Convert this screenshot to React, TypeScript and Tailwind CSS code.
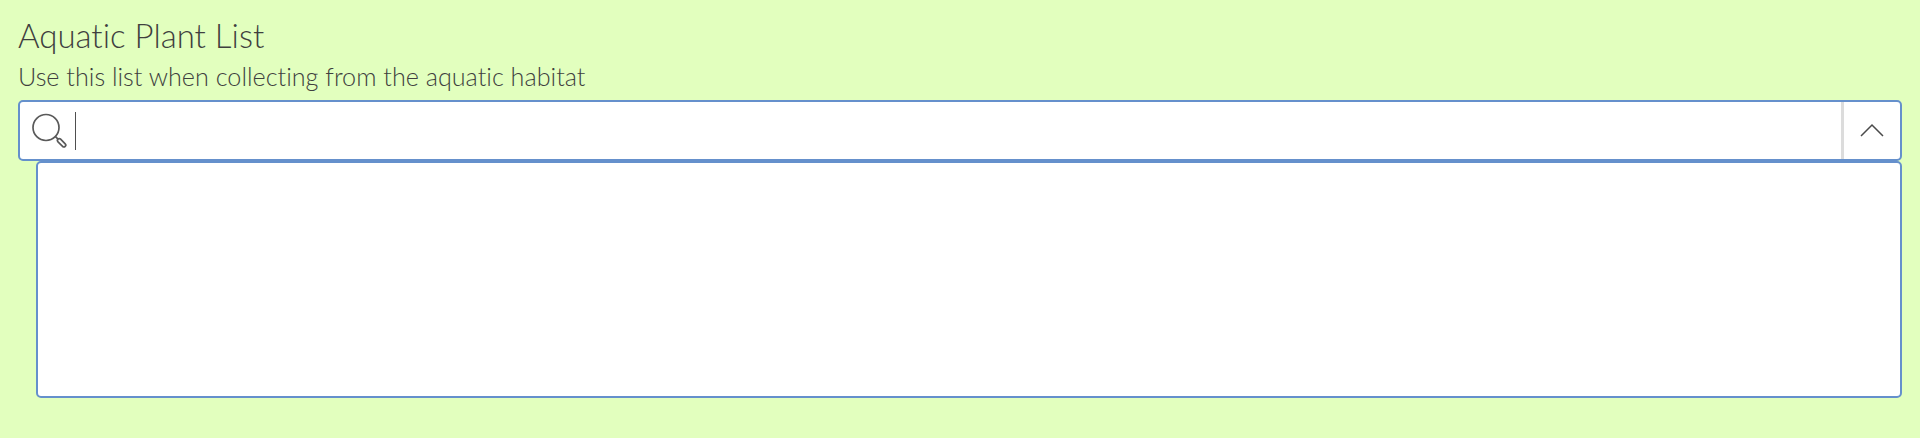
import React from 'react';

function SearchIcon(): React.ReactElement {
  return (
    <svg width="36" height="36" viewBox="0 0 36 36" fill="none" stroke="#5a5a5a" strokeWidth="1.7">
      <circle cx="14" cy="14.5" r="13" />
      <path d="M23.5 23.7 L26 26.2" />
      <path d="M26 26.2 C26.8 25.4 27.8 25.4 28.6 26.2 L33.2 30.8 C34 31.6 34 32.6 33.2 33.4 C32.4 34.2 31.4 34.2 30.6 33.4 L26 28.8 C25.2 28 25.2 27 26 26.2 Z" />
    </svg>
  );
}

function ChevronUp(): React.ReactElement {
  return (
    <svg width="24" height="14" viewBox="0 0 24 14" fill="none" stroke="#4a4a4a" strokeWidth="1.5">
      <path d="M1 13 L12 2 L23 13" />
    </svg>
  );
}

export default function App(): React.ReactElement {
  return (
    <div className="h-[438px] w-[1920px] overflow-hidden bg-[#e2ffbe] pl-[18px] pr-[18px] pt-[16px] font-['Lato',sans-serif] text-[#3f3f3f] [font-variant-ligatures:none]">
      <h2 className="h-[38px] text-[33px] font-light leading-[38px]">Aquatic Plant List</h2>
      <p className="mt-[7px] h-[30px] text-[25.2px] font-light leading-[30px]">Use this list when collecting from the aquatic habitat</p>

      {/* Search input */}
      <div className="mt-[9px] flex h-[61px] items-stretch rounded-[5px] border-2 border-[#6590cc] bg-white">
        <div className="flex flex-1 items-center pl-[12px]">
          <SearchIcon />
          <span className="ml-[7px] h-[38px] w-px bg-[#4f4f4f]" />
        </div>
        <div className="w-[3px] bg-[#dcdcdc]" />
        <button className="flex w-[56px] items-center justify-center pb-[2px] pr-[1px]">
          <ChevronUp />
        </button>
      </div>

      {/* Dropdown list */}
      <div className="ml-[18px] h-[237px] rounded-[5px] border-2 border-[#6590cc] bg-white" />
    </div>
  );
}
